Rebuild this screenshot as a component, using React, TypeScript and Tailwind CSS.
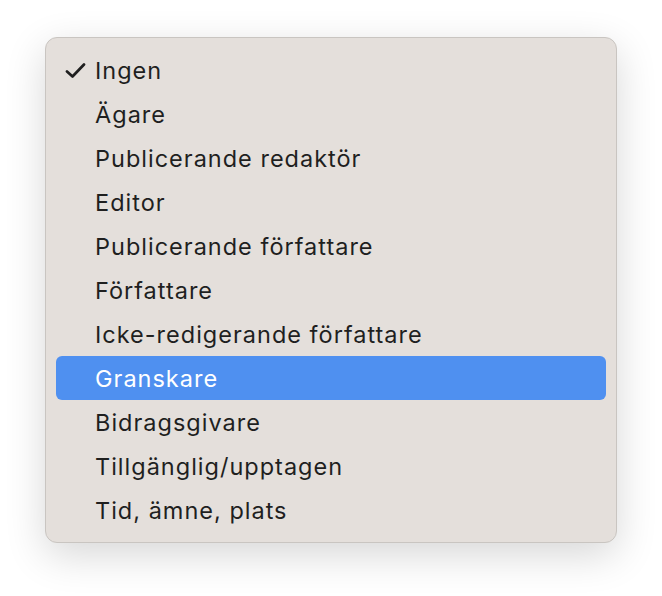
import React from 'react';

const items = [
    'Ingen',
    'Ägare',
    'Publicerande redaktör',
    'Editor',
    'Publicerande författare',
    'Författare',
    'Icke-redigerande författare',
    'Granskare',
    'Bidragsgivare',
    'Tillgänglig/upptagen',
    'Tid, ämne, plats',
];

const CHECKED = 0;
const ACTIVE = 7;

const Check = () => (
    <svg width="21" height="15" viewBox="0 0 21 15" fill="none">
        <path d="M2 8.5 L7.5 13.5 L19 1.5" stroke="#1f1f1f" strokeWidth="2.7" strokeLinecap="round" strokeLinejoin="round" />
    </svg>
);

export default function App() {
    return (
        <div className="w-[662px] h-[596px] bg-white pt-[37px] pl-[45px]" style={{ fontFamily: 'Inter, "Liberation Sans", sans-serif' }}>
            <div className="w-[572px] rounded-[12px] border border-[#c9c5c1] bg-[#e4dfdb] px-[10px] pt-[10px] pb-[10px] shadow-[0_12px_40px_rgba(0,0,0,0.16)]">
                {items.map((label, i) => (
                    <div
                        key={label}
                        className={
                            i === ACTIVE
                                ? 'flex h-[44px] items-center rounded-[6px] bg-[#4f90f0] text-white'
                                : 'flex h-[44px] items-center text-[#1f1f1f]'
                        }
                    >
                        <div className="flex w-[39px] justify-end pr-[9px] pt-[1px]">
                            {i === CHECKED && <Check />}
                        </div>
                        <span className="pt-[2px] text-[23.5px] leading-none tracking-[1px]">{label}</span>
                    </div>
                ))}
            </div>
        </div>
    );
}
